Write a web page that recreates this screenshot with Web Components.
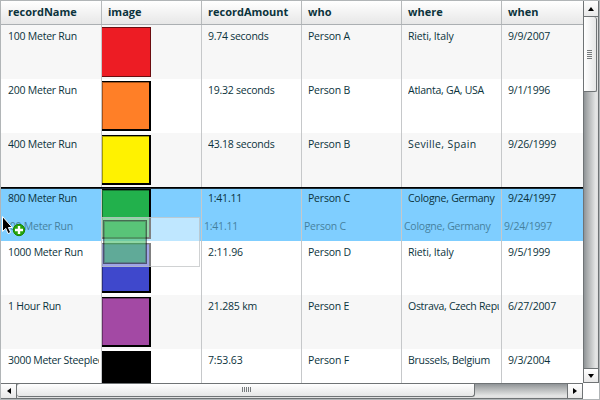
<!DOCTYPE html>
<html lang="en">
<head>
<meta charset="utf-8">
<title>Records</title>
<style>
html,body{margin:0;height:400px;overflow:hidden;background:#fff}
body{font:11px/15px "Open Sans",sans-serif;color:#0b333c}
</style>
</head>
<body>
<data-grid></data-grid>
<script>
/* A line of text whose tracking is set so that it spans a given width. */
class FitText extends HTMLElement{
  constructor(){
    super();
    this.attachShadow({mode:'open'}).innerHTML='<style>:host{display:block;font-size:10.5px;white-space:nowrap}span{display:inline-block}</style><span></span>';
  }
  connectedCallback(){
    const [t,w]=this.getAttribute('value').split('~'),s=this.shadowRoot.querySelector('span');
    s.textContent=t;
    s.style.letterSpacing=((w-s.getBoundingClientRect().width)/t.length).toFixed(3)+'px';
  }
}
customElements.define('fit-text',FitText);

class GridHeader extends HTMLElement{
  constructor(){
    super();
    this.attachShadow({mode:'open'}).innerHTML=`<style>
    :host{display:grid;grid-template-columns:101px repeat(4,100px) 81px;height:24px;box-sizing:border-box;
      background:linear-gradient(#fff,#e7e7e7);border-bottom:1px solid #abafb2;font-weight:700}
    span{padding:3px 0 0 6px;border-right:1px solid #b7babc}
    span:first-of-type{padding-left:7px}
    span:last-child{border:0}
    </style>${['recordName','image','recordAmount','who','where','when'].map(t=>`<span>${t}</span>`).join('')}`;
  }
}
customElements.define('grid-header',GridHeader);

class GridRow extends HTMLElement{
  constructor(){super();this.attachShadow({mode:'open'});}
  connectedCallback(){
    const v=this.getAttribute('values').split('|');
    this.shadowRoot.innerHTML=`<style>
    :host{display:grid;grid-template-columns:101px repeat(4,100px) 81px;height:54px;flex:none;background:#fff}
    :host([alt]){background:#f7f7f7}
    :host([over]){background:#7fceff}
    div{box-sizing:border-box;border-right:1px solid #c6c8ca;padding:4px 2px 0 6px}
    div:first-of-type{padding-left:7px}
    div:last-child{border-right:0}
    fit-text{overflow:hidden}
    .pic{padding:2px 0 0}
    i{display:block;box-sizing:border-box;width:49px;height:50px;border:solid #000;border-width:1px 2px 2px 0;background:${v[1]};box-shadow:inset 1px 1px rgba(0,0,0,.35)}
    :host([thin]) i{border:1px solid #6b0d10;border-left-width:0;box-shadow:none}
    </style>${v.map((t,n)=>n===1?'<div class="pic"><i></i></div>':`<div><fit-text value="${t}"></fit-text></div>`).join('')}`;
  }
}
customElements.define('grid-row',GridRow);

class ScrollRail extends HTMLElement{
  constructor(){super();this.attachShadow({mode:'open'});}
  connectedCallback(){
    const v=this.hasAttribute('vertical');
    const tri=v?['M0 5L3 1L6 5Z','M0 1L3 5L6 1Z']:['M5 0L1 3L5 6Z','M1 0L5 3L1 6Z'];
    const btn=p=>`<div class="btn"><svg width="6" height="6"><path d="${p}" fill="#000"/></svg></div>`;
    const dir=v?'to right':'to bottom';
    this.shadowRoot.innerHTML=`<style>
    :host{display:flex;flex-direction:${v?'column':'row'};box-sizing:border-box;
      background:linear-gradient(${dir},#8f9497,#a6a9aa 20%,#e5e6e6 85%,#dedede);
      border:solid #6f7375;border-width:${v?'0 1px':'1px 0'}}
    .btn{box-sizing:border-box;flex:none;${v?'height:16px':'width:16px'};display:flex;align-items:center;justify-content:center;
      background:linear-gradient(#fff,#e8e8e8);border:0 solid #6f7375}
    .btn:first-of-type{border-${v?'bottom':'right'}-width:1px}
    .btn:last-child{border-${v?'top':'left'}-width:1px;margin-${v?'top':'left'}:auto;${v?'height:15px;border-bottom-width:1px':'border-right-width:1px'}}
    .thumb{box-sizing:border-box;flex:none;${v?'height:75px;margin-right:1px;padding-right:1px':'width:458px;margin-bottom:1px;padding:0 0 1px 2px'};background:linear-gradient(${dir},#fff,#e6e6e6);
      border:solid #6f7375;border-width:0 1px 1px 0;border-radius:${v?'0 3px 2px 0':'3px 0 3px 3px'};
      display:flex;align-items:center;justify-content:center}
    .grip{${v?'width:5px;height:9px':'width:9px;height:5px'};background:repeating-linear-gradient(${v?'to bottom':'to right'},#777b7d 0 1px,transparent 1px 2px)}
    </style>${btn(tri[0])}<div class="thumb"><div class="grip"></div></div>${btn(tri[1])}`;
  }
}
customElements.define('scroll-rail',ScrollRail);

class DragProxy extends HTMLElement{
  constructor(){
    super();
    this.attachShadow({mode:'open'}).innerHTML=`<style>
    :host{display:grid;grid-template-columns:repeat(5,100px) 82px;position:absolute;left:-4px;top:214px;width:582px;height:54px}
    fit-text{padding:5px 0 0 8px;opacity:.5}
    .cell{box-sizing:border-box;width:99px;height:50px;margin:3px 0 0 5px;padding:2px 0 0 1px;background:rgba(255,255,255,.5);border:1px solid rgba(183,186,188,.65)}
    i{display:block;box-sizing:border-box;width:44px;height:44px;border:1px solid #000;outline:1px solid rgba(0,0,0,.45);outline-offset:-2px;background:#22b14c;opacity:.5}
    </style><fit-text value="800 Meter Run~69"></fit-text><div class="cell"><i></i></div><fit-text value="1:41.11~34"></fit-text><fit-text value="Person C~42"></fit-text><fit-text value="Cologne, Germany~86.5"></fit-text><fit-text value="9/24/1997~48"></fit-text>`;
  }
}
customElements.define('drag-proxy',DragProxy);

class CopyCursor extends HTMLElement{
  constructor(){
    super();
    this.attachShadow({mode:'open'}).innerHTML=`<style>:host{position:absolute;left:0;top:215px}svg{display:block}</style>
    <svg width="28" height="24" viewBox="0 0 28 24">
    <path d="M2.5 1.5V16.5L5.8 13.4L8.1 18.6L10.7 17.4L8.4 12.5H12.2Z" fill="#000" stroke="#fff" stroke-width="1"/>
    <circle cx="19" cy="15" r="5.7" fill="#27a50a" stroke="#178600"/>
    <path d="M19 11V19M15 15H23" stroke="#fff" stroke-width="2.4"/></svg>`;
  }
}
customElements.define('copy-cursor',CopyCursor);

class DataGrid extends HTMLElement{
  constructor(){
    super();
    const rows=[
      ['alt thin','100 Meter Run~69|#ed1c24|9.74 seconds~60.5|Person A~42|Rieti, Italy~45.5|9/9/2007~42'],
      ['','200 Meter Run~69|#ff7f27|19.32 seconds~66.5|Person B~42|Atlanta, GA, USA~76|9/1/1996~42'],
      ['alt','400 Meter Run~69|#fff200|43.18 seconds~66.5|Person B~42|Seville, Spain~68.5|9/26/1999~48'],
      ['over','800 Meter Run~69|#22b14c|1:41.11~34|Person C~42|Cologne, Germany~86.5|9/24/1997~48'],
      ['','1000 Meter Run~75|#3f48cc|2:11.96~35|Person D~43|Rieti, Italy~45.5|9/5/1999~42'],
      ['alt','1 Hour Run~53|#a349a4|21.285 km~49|Person E~41|Ostrava, Czech Repu~95|6/27/2007~48'],
      ['','3000 Meter Steeplec~94.5|#000|7:53.63~34.5|Person F~41|Brussels, Belgium~82|9/3/2004~42']];
    this.attachShadow({mode:'open'}).innerHTML=`<style>
    :host{display:grid;box-sizing:border-box;position:relative;width:600px;height:400px;overflow:hidden;
      border:1px solid #b1b5b7;grid-template:382px 16px / 582px 16px;background:#fff}
    main{display:flex;flex-direction:column;overflow:hidden;min-height:0}
    grid-header{flex:none}
    .drop{position:absolute;left:0;top:186px;width:582px;height:2px;background:linear-gradient(#000 1px,#1b2a33 1px)}
    .overlay{position:absolute;left:-1px;top:-1px}
    </style><main><grid-header></grid-header>${rows.map(([s,r])=>`<grid-row values="${r}" ${s}></grid-row>`).join('')}</main>
    <scroll-rail vertical></scroll-rail><scroll-rail></scroll-rail>
    <div class="drop"></div><div class="overlay"><drag-proxy></drag-proxy><copy-cursor></copy-cursor></div>`;
  }
}
customElements.define('data-grid',DataGrid);
</script>
</body>
</html>
